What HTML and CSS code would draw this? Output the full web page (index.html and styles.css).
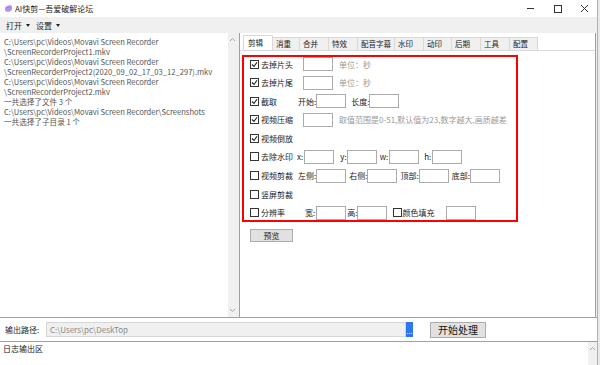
FILE: index.html
```html
<!DOCTYPE html>
<html>
<head>
    <meta charset="utf-8">
    <title>AI快剪—吾爱破解论坛</title>
    <link rel="stylesheet" href="styles.css">
</head>
<body>
<div class="win">
    <div class="titlebar">
        <svg class="logo" viewBox="0 0 10 10">
            <path d="M1 6 C1 3 3 1.5 5 2 C6 0.5 9 1 9 4 C9.5 6 8 8.5 5.5 8.5 C3 9 1 8 1 6 Z" fill="#b893ec"/>
            <path d="M3 5 C4 3.5 6 3.5 7 4.5" stroke="#8a7fe6" stroke-width="1" fill="none"/>
        </svg>
        <span class="title">AI快剪—吾爱破解论坛</span>
        <div class="ctrls">
            <svg viewBox="0 0 9 9"><path d="M1 4.5 H8" stroke="#333" stroke-width="1"/></svg>
            <svg viewBox="0 0 9 9"><rect x="1.5" y="1.5" width="7" height="7" stroke="#333" stroke-width="1" fill="none"/></svg>
            <svg viewBox="0 0 9 9" class="last"><path d="M1 1 L8 8 M8 1 L1 8" stroke="#333" stroke-width="1"/></svg>
        </div>
    </div>
    <div class="menubar">
        <span class="menu">打开<i class="caret"></i></span>
        <span class="menu">设置<i class="caret"></i></span>
    </div>
    <div class="main">
        <div class="files">
            <div class="list">
                <div>C:\Users\pc\Videos\Movavi Screen Recorder</div>
                <div>\ScreenRecorderProject1.mkv</div>
                <div>C:\Users\pc\Videos\Movavi Screen Recorder</div>
                <div>\ScreenRecorderProject2(2020_09_02_17_03_12_297).mkv</div>
                <div>C:\Users\pc\Videos\Movavi Screen Recorder</div>
                <div>\ScreenRecorderProject2.mkv</div>
                <div>一共选择了文件 3 个</div>
                <div>C:\Users\pc\Videos\Movavi Screen Recorder\Screenshots</div>
                <div>一共选择了子目录 1 个</div>
            </div>
            <div class="vscroll">
                <svg viewBox="0 0 7 5"><path d="M1 4 L3.5 1.5 L6 4" stroke="#a6a6a6" fill="none"/></svg>
                <svg viewBox="0 0 7 5"><path d="M1 1 L3.5 3.5 L6 1" stroke="#a6a6a6" fill="none"/></svg>
            </div>
        </div>
        <div class="split"></div>
        <div class="panel">
            <ul class="tabs">
                <li class="active">剪辑</li>
                <li class="w27">消重</li>
                <li>合并</li>
                <li>特效</li>
                <li class="w37">配音字幕</li>
                <li>水印</li>
                <li class="w28">动印</li>
                <li>后期</li>
                <li>工具</li>
                <li class="w28">配置</li>
            </ul>
            <div class="page">
                <div class="opts">
                    <div class="row">
                        <span class="lead"><span class="cb on"><svg viewBox="0 0 7 7"><path d="M1 3.5 L3 5.5 L6 1.2"/></svg></span>去掉片头</span>
                        <span class="in ml6"></span>
                        <span class="tip ml6">单位：秒</span>
                    </div>
                    <div class="row">
                        <span class="lead"><span class="cb on"><svg viewBox="0 0 7 7"><path d="M1 3.5 L3 5.5 L6 1.2"/></svg></span>去掉片尾</span>
                        <span class="in ml6"></span>
                        <span class="tip ml6">单位：秒</span>
                    </div>
                    <div class="row">
                        <span class="lead"><span class="cb on"><svg viewBox="0 0 7 7"><path d="M1 3.5 L3 5.5 L6 1.2"/></svg></span>截取</span>
                        <span class="lbl ml1">开始:</span>
                        <span class="in"></span>
                        <span class="lbl ml5">长度:</span>
                        <span class="in"></span>
                    </div>
                    <div class="row">
                        <span class="lead"><span class="cb on"><svg viewBox="0 0 7 7"><path d="M1 3.5 L3 5.5 L6 1.2"/></svg></span>视频压缩</span>
                        <span class="in ml6"></span>
                        <span class="tip ml6">取值范围是0-51,默认值为23,数字越大,画质越差</span>
                    </div>
                    <div class="row">
                        <span class="lead"><span class="cb on"><svg viewBox="0 0 7 7"><path d="M1 3.5 L3 5.5 L6 1.2"/></svg></span>视频倒放</span>
                    </div>
                    <div class="row">
                        <span class="lead"><span class="cb"></span>去除水印</span>
                        <span class="lbl">x:</span>
                        <span class="in ml1"></span>
                        <span class="lbl ml6">y:</span>
                        <span class="in"></span>
                        <span class="lbl ml3">w:</span>
                        <span class="in ml1"></span>
                        <span class="lbl ml5">h:</span>
                        <span class="in ml1"></span>
                    </div>
                    <div class="row">
                        <span class="lead"><span class="cb"></span>视频剪裁</span>
                        <span class="lbl ml1">左侧:</span>
                        <span class="in"></span>
                        <span class="lbl ml3">右侧:</span>
                        <span class="in"></span>
                        <span class="lbl ml3">顶部:</span>
                        <span class="in"></span>
                        <span class="lbl ml3">底部:</span>
                        <span class="in"></span>
                    </div>
                    <div class="row">
                        <span class="lead"><span class="cb"></span>竖屏剪裁</span>
                    </div>
                    <div class="row">
                        <span class="lead"><span class="cb"></span>分辨率</span>
                        <span class="lbl ml8">宽:</span>
                        <span class="in ml1"></span>
                        <span class="lbl ml1">高:</span>
                        <span class="in"></span>
                        <span class="cb tight ml6"></span>
                        <span class="lbl">颜色填充</span>
                        <span class="in ml12"></span>
                    </div>
                </div>
                <button class="btn preview">预览</button>
            </div>
        </div>
    </div>
    <div class="outrow">
        <span class="outlbl">输出路径:</span>
        <span class="path">C:\Users\pc\DeskTop</span>
        <span class="dots">...</span>
        <button class="btn go">开始处理</button>
    </div>
    <div class="log">
        <div class="logtext">日志输出区</div>
        <div class="vscroll">
            <svg viewBox="0 0 7 5"><path d="M1 4 L3.5 1.5 L6 4" stroke="#a6a6a6" fill="none"/></svg>
        </div>
    </div>
</div>
</body>
</html>
```

FILE: styles.css
```css
*{
    margin: 0;
    padding: 0;
    box-sizing: border-box;
}
ul,li{
    list-style: none;
}
body{
    width: 600px;
    height: 365px;
    overflow: hidden;
    background: #e9e9e9;
    font-family: "Noto Sans CJK SC", "Noto Sans", sans-serif;
    font-size: 8px;
    color: #222;
}
.win{
    width: 598px;
    height: 365px;
    background: #f0f0f0;
    border-right: 1px solid #b0b0b0;
    display: flex;
    flex-direction: column;
}
.titlebar{
    height: 17px;
    background: #fff;
    display: flex;
    align-items: center;
}
.logo{
    width: 9px;
    height: 9px;
    margin: 0 2px 0 4px;
}
.title{
    font-size: 8px;
    color: #222;
}
.ctrls{
    margin-left: auto;
    display: flex;
    align-items: center;
}
.ctrls svg{
    width: 9px;
    height: 9px;
    margin-right: 18px;
}
.ctrls svg.last{
    margin-right: 8px;
}
.menubar{
    height: 16px;
    display: flex;
    align-items: center;
    padding-left: 6px;
    background: #f0f0f0;
}
.menu{
    display: flex;
    align-items: center;
    margin-right: 6px;
}
.caret{
    width: 0;
    height: 0;
    margin-left: 4px;
    border-left: 2.5px solid transparent;
    border-right: 2.5px solid transparent;
    border-top: 3px solid #222;
}
.main{
    height: 284px;
    display: flex;
    background: #f0f0f0;
}
.files{
    width: 237px;
    display: flex;
    background: #fff;
}
.list{
    flex: 1;
    padding: 4px 0 0 4px;
    font-size: 7.6px;
    line-height: 10px;
    color: #555;
    white-space: nowrap;
    overflow: hidden;
}
.vscroll{
    width: 9px;
    background: #f0f0f0;
    display: flex;
    flex-direction: column;
    justify-content: space-between;
    align-items: center;
    padding: 4px 0;
}
.vscroll svg{
    width: 7px;
    height: 5px;
}
.split{
    width: 2px;
}
.panel{
    width: 357px;
    background: #fff;
    border-left: 1px solid #a0a0a0;
    border-right: 1px solid #a0a0a0;
    padding-top: 2px;
}
.tabs{
    height: 15px;
    display: flex;
    align-items: flex-end;
    padding-left: 3px;
}
.tabs li{
    width: 30px;
    height: 13px;
    margin-right: -1px;
    padding-left: 3px;
    background: #f0f0f0;
    border: 1px solid #d9d9d9;
    border-bottom: none;
    font-size: 7.5px;
    line-height: 11px;
    color: #222;
}
.tabs li.active{
    height: 15px;
    background: #fff;
    line-height: 13px;
    padding-left: 4px;
}
.tabs li.w27{
    width: 28px;
}
.tabs li.w28{
    width: 29px;
}
.tabs li.w37{
    width: 38px;
}
.page{
    border-top: 1px solid #d9d9d9;
    padding: 4px 0 0 2px;
}
.opts{
    width: 276px;
    border: 2px solid #f00;
    padding-left: 6px;
}
.row{
    height: 14px;
    display: flex;
    align-items: center;
    margin-bottom: 4.6px;
    white-space: nowrap;
}
.row:last-child{
    margin-bottom: 0;
}
.lead{
    width: 47px;
    flex: none;
    display: flex;
    align-items: center;
}
.cb{
    width: 9px;
    height: 9px;
    flex: none;
    border: 1px solid #333;
    background: #fff;
    margin-right: 2px;
    display: flex;
}
.cb.tight{
    margin-right: 0;
}
.cb svg{
    width: 7px;
    height: 7px;
}
.cb path{
    stroke: #222;
    stroke-width: 1.1;
    fill: none;
}
.in{
    width: 30px;
    height: 14px;
    flex: none;
    border: 1px solid #ababab;
    background: #fff;
}
.tip{
    color: #999;
}
.ml1{ margin-left: 1px; }
.ml3{ margin-left: 3px; }
.ml5{ margin-left: 5px; }
.ml6{ margin-left: 6px; }
.ml8{ margin-left: 8px; }
.ml12{ margin-left: 12px; }
.btn{
    font-family: "Noto Sans CJK SC", "Noto Sans", sans-serif;
    background: #e1e1e1;
    border: 1px solid #adadad;
    color: #222;
}
.preview{
    width: 43px;
    height: 13px;
    margin: 7px 0 0 8px;
    font-size: 8px;
    line-height: 11px;
}
.outrow{
    height: 24px;
    border-top: 1px solid #a0a0a0;
    background: #fff;
    display: flex;
    align-items: center;
}
.outlbl{
    width: 46px;
    padding-left: 5px;
}
.path{
    width: 360px;
    height: 15px;
    background: #f0f0f0;
    border: 1px solid #d6d6d6;
    color: #8a8a8a;
    padding-left: 3px;
    line-height: 13px;
}
.dots{
    width: 7px;
    height: 15px;
    background: #2d78f0;
    color: #fff;
    font-size: 7px;
    line-height: 18px;
    text-align: center;
    overflow: hidden;
}
.go{
    width: 56px;
    height: 16px;
    margin-left: 17px;
    font-size: 10px;
    line-height: 14px;
    color: #111;
}
.log{
    flex: 1;
    border-top: 1px solid #a0a0a0;
    background: #fff;
    display: flex;
}
.logtext{
    flex: 1;
    padding: 2px 3px;
    line-height: 10px;
    color: #222;
}
.log .vscroll{
    justify-content: flex-start;
}
```
